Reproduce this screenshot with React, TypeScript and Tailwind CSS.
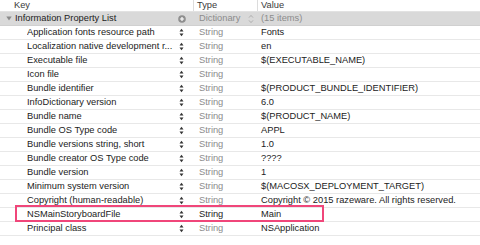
import React from "react";

type Item = { key: string; value: string; strong?: boolean };

const items: Item[] = [
  { key: "Application fonts resource path", value: "Fonts" },
  { key: "Localization native development r...", value: "en" },
  { key: "Executable file", value: "$(EXECUTABLE_NAME)" },
  { key: "Icon file", value: "" },
  { key: "Bundle identifier", value: "$(PRODUCT_BUNDLE_IDENTIFIER)" },
  { key: "InfoDictionary version", value: "6.0" },
  { key: "Bundle name", value: "$(PRODUCT_NAME)" },
  { key: "Bundle OS Type code", value: "APPL" },
  { key: "Bundle versions string, short", value: "1.0" },
  { key: "Bundle creator OS Type code", value: "????" },
  { key: "Bundle version", value: "1" },
  { key: "Minimum system version", value: "$(MACOSX_DEPLOYMENT_TARGET)" },
  { key: "Copyright (human-readable)", value: "Copyright © 2015 razeware. All rights reserved." },
  { key: "NSMainStoryboardFile", value: "Main", strong: true },
  { key: "Principal class", value: "NSApplication" },
];

function Stepper() {
  return (
    <svg width="5" height="9" viewBox="0 0 5 9" className="shrink-0">
      <path d="M0.5 3.5 L2.5 0.8 L4.5 3.5 Z" fill="#333" />
      <path d="M0.5 5.5 L2.5 8.2 L4.5 5.5 Z" fill="#333" />
    </svg>
  );
}

function PlusCircle() {
  return (
    <svg width="8" height="8" viewBox="0 0 8 8" className="shrink-0">
      <circle cx="4" cy="4" r="3.8" fill="#8e8e8e" />
      <path d="M4 1.9 V6.1 M1.9 4 H6.1" stroke="#fff" strokeWidth="1.2" />
    </svg>
  );
}

function UpDown() {
  return (
    <svg width="6" height="10" viewBox="0 0 6 10" className="shrink-0">
      <path d="M1 3.6 L3 1.4 L5 3.6" fill="none" stroke="#a8a8a8" strokeWidth="0.9" />
      <path d="M1 6.4 L3 8.6 L5 6.4" fill="none" stroke="#a8a8a8" strokeWidth="0.9" />
    </svg>
  );
}

function Disclosure() {
  return (
    <svg width="6" height="5" viewBox="0 0 6 5" className="shrink-0">
      <path d="M0.3 0.5 L5.7 0.5 L3 4.6 Z" fill="#8a8a8a" />
    </svg>
  );
}

export default function App() {
  return (
    <div
      className="relative w-[480px] h-[245px] bg-white overflow-hidden text-[9.3px] leading-none"
      style={{ fontFamily: '"Liberation Sans", Arial, sans-serif' }}
    >
      {/* header */}
      <div className="flex h-[12px] border-b border-[#e2e2e2] text-[#3a3a3a]">
        <div className="w-[193px] pl-[14px] flex items-center">Key</div>
        <div className="w-[64px] border-l border-[#dcdcdc] pl-[3px] flex items-center">Type</div>
        <div className="flex-1 border-l border-[#dcdcdc] pl-[3px] flex items-center">Value</div>
      </div>

      {/* root row */}
      <div className="flex h-[14px] bg-[#d9d9d9] border-b border-[#d0d0d0] text-[#222]">
        <div className="w-[193px] flex items-center pl-[6px] pr-[7px]">
          <Disclosure />
          <span className="ml-[3px] flex-1">Information Property List</span>
          <PlusCircle />
        </div>
        <div className="w-[64px] flex items-center pl-[6px] pr-[3px] text-[#8c8c8c]">
          <span className="flex-1">Dictionary</span>
          <UpDown />
        </div>
        <div className="flex-1 flex items-center pl-[4px] text-[#8c8c8c]">(15 items)</div>
      </div>

      {items.map((it) => (
        <div key={it.key} className="flex h-[14px] border-b border-[#e8e8e8]">
          <div className="w-[193px] flex items-center pl-[27px] pr-[9px] text-[#222]">
            <span className="flex-1 whitespace-nowrap overflow-hidden">{it.key}</span>
            <Stepper />
          </div>
          <div
            className={
              it.strong
                ? "w-[64px] flex items-center pl-[6px] text-[#222]"
                : "w-[64px] flex items-center pl-[6px] text-[#8c8c8c]"
            }
          >
            String
          </div>
          <div className="flex-1 flex items-center pl-[4px] text-[#222] whitespace-nowrap">{it.value}</div>
        </div>
      ))}

      {/* highlight box */}
      <div className="absolute left-[15px] top-[205px] w-[309px] h-[17px] border-2 border-[#f0467a]" />
    </div>
  );
}
